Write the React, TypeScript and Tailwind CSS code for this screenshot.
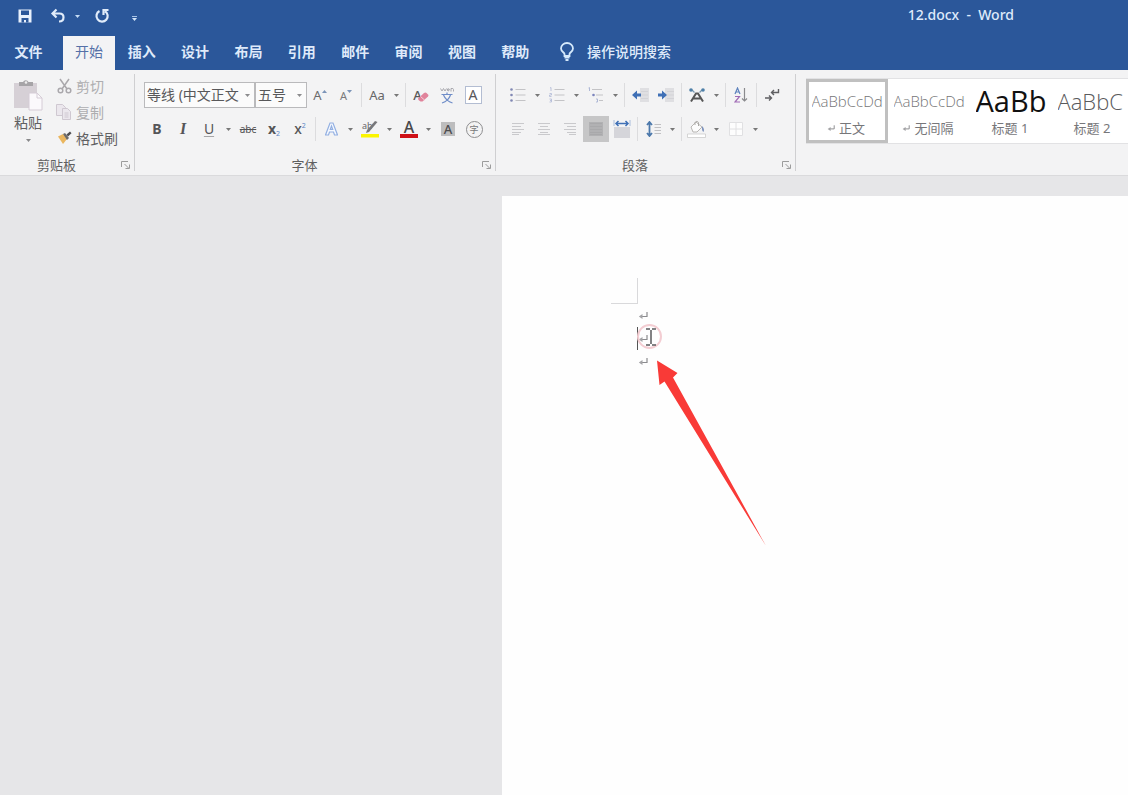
import type { ReactNode } from "react";

const FONT = "font-['Noto_Sans','Noto_Sans_CJK_SC',sans-serif]";

function Caret() {
  return (
    <svg width="5" height="3" viewBox="0 0 5 3" aria-hidden="true">
      <path d="M0 0h5L2.5 3z" fill="currentColor" />
    </svg>
  );
}

function Tool({ label, children, active }: { label: string; children: ReactNode; active?: boolean }) {
  return (
    <button
      type="button"
      aria-label={label}
      className={`flex h-[26px] w-[26px] shrink-0 items-center justify-center leading-none ${active ? "bg-[#c6c6c7]" : ""}`}
    >
      {children}
    </button>
  );
}

function SplitTool({ label, children }: { label: string; children: ReactNode }) {
  return (
    <button type="button" aria-label={label} className="flex h-[26px] w-[39px] shrink-0 items-center leading-none">
      <span className="flex w-[26px] items-center justify-center">{children}</span>
      <span className="flex w-[13px] justify-center text-[#777]">
        <Caret />
      </span>
    </button>
  );
}

function Divider() {
  return (
    <span className="flex w-[5px] shrink-0 justify-center">
      <span className="h-6 w-px bg-[#dcdcde]" />
    </span>
  );
}

function Group({ name, children, className }: { name: string; children: ReactNode; className: string }) {
  return (
    <section aria-label={name} className={`relative flex shrink-0 flex-col ${className}`}>
      <div className="flex-1">{children}</div>
      <div className="flex h-5 items-center">
        <span className="flex-1 pr-1 text-center text-[13px] leading-5 text-[#606060]">{name}</span>
        <button type="button" aria-label={`${name}设置`} className="flex w-[18px] justify-center">
          <svg width="10" height="10" viewBox="0 0 10 10" fill="none" stroke="#9c9c9c">
            <path d="M.5 7V1.500H7M3.500 4l4 4M8.500 4.500v4h-4" />
          </svg>
        </button>
      </div>
      <span className="absolute top-1 right-0 bottom-1 w-px bg-[#cfcfd1]" />
    </section>
  );
}

function SaveIcon() {
  return (
    <svg width="14" height="14" viewBox="0 0 14 14">
      <path d="M0.500 0.500h13v13h-13z" fill="#e9f1fc" />
      <path d="M3 1.500h8v4.500H3zM3.500 9h7v4.500H8V11H6v2.500H3.500z" fill="#2b579a" />
    </svg>
  );
}

function UndoIcon() {
  return (
    <svg width="16" height="16" viewBox="0 0 16 16" fill="none" stroke="#e1ecfa" strokeWidth="2.200">
      <path d="M6.500 1.500 2.500 5.500l4 4M3 5.500h6.500c2.500 0 4 1.500 4 3.700 0 2.500-1.700 4.300-4.500 4.300" />
    </svg>
  );
}

function RedoIcon() {
  return (
    <svg width="16" height="16" viewBox="0 0 16 16" fill="none" stroke="#e1ecfa" strokeWidth="2.200">
      <path d="M5.500 3A5.600 5.600 0 1 0 11 3.200M9.500 7V2h5" />
    </svg>
  );
}

function BulbIcon() {
  return (
    <svg width="14" height="20" viewBox="0 0 14 20" fill="none" stroke="#d5e9fb" strokeWidth="1.800">
      <path d="M4.500 14v-2C4.500 10.500 1 9.500 1 6.500a6 5.500 0 0 1 12 0c0 3-3.500 4-3.500 5.500v2z" />
      <path d="M4.500 15.500h5M5.500 18h3" strokeWidth="2" />
    </svg>
  );
}

function PasteIcon() {
  return (
    <svg width="30" height="32" viewBox="0 0 30 32">
      <path d="M1 4h23v25H1z" fill="#d6d0d6" />
      <path d="M6 3h4a3 3 0 0 1 5.500 0H20v4H6z" fill="#a6a4a7" />
      <circle cx="13" cy="3.500" r="1.300" fill="#eee" />
      <path d="M16 14h8l5 5v12H16z" fill="#fbf9fc" stroke="#d5ccd6" />
      <path d="M24 14v5h5" fill="none" stroke="#d5ccd6" />
    </svg>
  );
}

function CutIcon() {
  return (
    <svg width="15" height="16" viewBox="0 0 15 16" fill="none" stroke="#aaa8ac" strokeWidth="1.500">
      <path d="M3 1l7 10M12 1L5 11" />
      <circle cx="3.500" cy="12.500" r="2.300" />
      <circle cx="11.500" cy="12.500" r="2.300" />
    </svg>
  );
}

function CopyIcon() {
  return (
    <svg width="16" height="16" viewBox="0 0 16 16" fill="#ebe7ed" stroke="#cfc8d1">
      <path d="M.5.5h6l3 3v8h-9z" />
      <path d="M6.500 4.500h5l3 3v8h-8zM8.500 9h4M8.500 11h4M8.500 13h4" />
    </svg>
  );
}

function BrushIcon() {
  return (
    <svg width="15" height="14" viewBox="0 0 15 14">
      <path d="M1 5.500 6 3l4 5-4 5z" fill="#eab65f" />
      <path d="M6 3l2-1 4 5-2 2z" fill="#6d6a68" />
      <path d="M9.500 3.500 13 .5l1.500 1.800L11 5.500z" fill="#4d4d50" />
    </svg>
  );
}

function ListIcon({ numbered }: { numbered?: boolean }) {
  return (
    <svg width="16" height="16" viewBox="0 0 16 16">
      <path d="M5.500 2.500h10M5.500 8h10M5.500 13.500h10" stroke="#c3c3c6" />
      {numbered ? (
        <path d="M1 1l1-.5V4M.5 6.500h2V8h-2v1.500h2M.5 12h2v3h-2M1 13.500h1.500" fill="none" stroke="#aeb8d6" strokeWidth=".8" />
      ) : (
        <g fill="#8188b4">
          <circle cx="1.500" cy="2.500" r="1.300" />
          <circle cx="1.500" cy="8" r="1.300" />
          <circle cx="1.500" cy="13.500" r="1.300" />
        </g>
      )}
    </svg>
  );
}

function MultiLevelIcon() {
  return (
    <svg width="16" height="16" viewBox="0 0 16 16" fill="none">
      <path d="M4 2.500h10M8 8h7M11 13.500h4" stroke="#c3c3c6" />
      <path d="M.5 1l1-.5V4M8 12h1.500v3H8" stroke="#aeb8d6" />
      <circle cx="5.500" cy="8" r="1.300" fill="#7b85bd" />
    </svg>
  );
}

function IndentIcon({ right }: { right?: boolean }) {
  return (
    <svg width="17" height="14" viewBox="0 0 17 14">
      <path d={right ? "M7 0h9v14H7z" : "M8 0h9v14H8z"} fill="#dfdfe2" />
      <path d="M9 3.500h7M9 7h7M9 10.500h7" stroke="#d3d3d7" />
      <path
        d={right ? "M0 5.500h4V2.500l5 4.500-5 4.500V8.500H0z" : "M9 5.500H5V2.500L0 7l5 4.500V8.500h4z"}
        fill="#3f70b6"
      />
    </svg>
  );
}

function AsianLayoutIcon() {
  return (
    <svg width="16" height="14" viewBox="0 0 16 14" fill="none">
      <path d="M2 13.500 7 5.500h2l5 8M4.500 10.500h7" stroke="#555" strokeWidth="2" />
      <path d="M5.500 4.500 3 2M10.500 4.500 13 2" stroke="#7897ad" strokeWidth="1.300" />
      <circle cx="2" cy="2" r="1.800" fill="#4d7fa8" />
      <circle cx="14" cy="2" r="1.800" fill="#4d7fa8" />
    </svg>
  );
}

function SortIcon() {
  return (
    <svg width="14" height="16" viewBox="0 0 14 16" fill="none">
      <path d="M1 7 3.500 1 6 7M2 5h3" stroke="#5d82bd" strokeWidth="1.200" />
      <path d="M1 9.500h4.500L1 15h5" stroke="#a06bb5" strokeWidth="1.200" />
      <path d="M10.500 1v13M8 11.500l2.500 2.500 2.500-2.500" stroke="#8a8a8d" strokeWidth="1.200" />
    </svg>
  );
}

function MarksIcon() {
  return (
    <svg width="16" height="14" viewBox="0 0 16 14" fill="none" stroke="#5f5f62" strokeWidth="1.400">
      <path d="M14.500 1v3.500H8M10 2 7.500 4.500 10 7M1 10h6M5 7.500 7.500 10 5 12.500" />
    </svg>
  );
}

function AlignIcon({ d, active }: { d: string; active?: boolean }) {
  return (
    <svg width="14" height="14" viewBox="0 0 14 14">
      {active && <path d="M0 0h14v14H0z" fill="#b1b1b3" />}
      <path d={d} stroke={active ? "#a9a9ab" : "#c9c9cc"} />
    </svg>
  );
}

function DistributeIcon() {
  return (
    <svg width="18" height="18" viewBox="0 0 18 18">
      <path d="M1 7h16v11H1z" fill="#d5d5da" />
      <path d="M1 0v6M17 0v6" stroke="#a9bddc" />
      <path d="M3 3.500h12M5.500 1 3 3.500 5.500 6M12.500 1 15 3.500 12.500 6" fill="none" stroke="#3f70b6" strokeWidth="1.500" />
    </svg>
  );
}

function SpacingIcon() {
  return (
    <svg width="15" height="16" viewBox="0 0 15 16" fill="none">
      <path d="M3.500 1v14M1 4l2.500-3L6 4M1 12l2.500 3L6 12" stroke="#4c78ab" strokeWidth="1.800" />
      <path d="M8.500 3.500H15M8.500 6.500H15M8.500 9.500H15M8.500 12.500H15" stroke="#c0c0c3" />
    </svg>
  );
}

function BucketIcon() {
  return (
    <svg width="20" height="18" viewBox="0 0 20 18">
      <path d="M4 7l5-5 6 5-5 5H6z" fill="#fcfcfc" stroke="#b8b6b3" />
      <path d="M8 5V2.500a2 2 0 0 1 3.500 0V6" fill="none" stroke="#aaa8a5" />
      <path d="M15 6q3 3 1.500 6-2-1-1.500-6z" fill="#7e93bd" />
      <path d="M.5 14h18v3.500H.5z" fill="#fff" stroke="#c5c5c6" strokeWidth=".7" />
    </svg>
  );
}

function BordersIcon() {
  return (
    <svg width="14" height="14" viewBox="0 0 14 14" fill="#fdfdfd" stroke="#e0e0e2">
      <path d="M.5.5h13v13H.5zM7 .5v13M.5 7h13" />
    </svg>
  );
}

function EraserIcon() {
  return (
    <span className="flex items-center text-[13px] font-medium text-[#58585a]">
      A
      <svg className="mt-1 -ml-1" width="11" height="10" viewBox="0 0 11 10">
        <path d="M0 6.500 6 1q1.500-1 2.500 0l1.500 1.500q1 1 0 2L4.500 9.500H2.500L.5 8z" fill="#e0839b" />
        <path d="M2.500 4.500 6.500 8" stroke="#f5ccd5" />
      </svg>
    </span>
  );
}

function PhoneticIcon() {
  return (
    <svg width="14" height="18" viewBox="0 0 14 18" fill="none">
      <path d="M.5 2.500 2 5l1.500-2.500L5 5l1.500-2.500M7 4h2.500Q9 2 7.500 3q-1 1.500 1.500 2M11 5.500v-3q2.500-.5 2.500 1v2" stroke="#a2a2a8" strokeWidth=".9" />
      <path d="M1.500 8.500h11M7 6.500v2M10.500 9Q8.500 15 2 17M3.500 9Q6 15 12.500 17" stroke="#6f8dc8" strokeWidth="1.200" />
    </svg>
  );
}

function ReturnMark({ small }: { small?: boolean }) {
  return (
    <svg width={small ? 8 : 10} height={small ? 7 : 8} viewBox="0 0 10 8" fill="none" stroke="#8b8b8e" aria-hidden="true">
      <path d="M9 0v4.500H3" strokeWidth="1.200" />
      <path d="M4.500 2 .8 4.500 4.500 7z" fill="#a3a3a6" stroke="none" />
    </svg>
  );
}

function FontGroup() {
  return (
    <Group name="字体" className="w-[361px]">
      <div className="flex flex-col gap-2 pt-3 pl-[9px]">
        <div className="flex h-[26px] items-center">
          <label className="relative flex">
            <span className="sr-only">字体名称</span>
            <select className="h-[26px] w-[111px] appearance-none border border-[#bababc] bg-[#fbfbfb] pr-3 pl-[2px] text-[14px] leading-6 text-[#58585a]">
              <option>等线 (中文正文</option>
            </select>
            <span className="pointer-events-none absolute top-0 right-0 flex h-full w-4 items-center justify-center text-[#8c8c8e]">
              <Caret />
            </span>
          </label>
          <label className="relative flex">
            <span className="sr-only">字号</span>
            <select className="h-[26px] w-[52px] appearance-none border border-[#bababc] bg-[#fbfbfb] pl-[2px] text-[14px] leading-6 text-[#58585a]">
              <option>五号</option>
            </select>
            <span className="pointer-events-none absolute top-0 right-0 flex h-full w-4 items-center justify-center text-[#8c8c8e]">
              <Caret />
            </span>
          </label>
          <Tool label="增大字号">
            <span className="text-[13px] text-[#6a6a6c]">A</span>
            <svg className="mb-2" width="5" height="3" viewBox="0 0 5 3" fill="#7b94b8"><path d="M0 3h5L2.500 0z" /></svg>
          </Tool>
          <Tool label="减小字号">
            <span className="text-[11px] text-[#7a7a7c]">A</span>
            <svg className="mb-2" width="5" height="3" viewBox="0 0 5 3" fill="#7b94b8"><path d="M0 0h5L2.500 3z" /></svg>
          </Tool>
          <Divider />
          <SplitTool label="更改大小写">
            <span className="text-[13px] text-[#666668]">Aa</span>
          </SplitTool>
          <Divider />
          <Tool label="清除格式">
            <EraserIcon />
          </Tool>
          <Tool label="拼音指南">
            <PhoneticIcon />
          </Tool>
          <Tool label="字符边框">
            <span className="flex h-[18px] w-[17px] items-center justify-center border border-[#b3bdd2] bg-white text-[14px] text-[#58585a]">
              A
            </span>
          </Tool>
        </div>
        <div className="flex h-[26px] items-center text-[#555557]">
          <Tool label="加粗">
            <span className="text-[14px] font-bold">B</span>
          </Tool>
          <Tool label="倾斜">
            <span className="font-['Liberation_Serif',serif] text-[16px] font-bold italic">I</span>
          </Tool>
          <SplitTool label="下划线">
            <span className="text-[14px] underline decoration-[#a5a5a7] underline-offset-2">U</span>
          </SplitTool>
          <Tool label="删除线">
            <span className="text-[10px] line-through">abc</span>
          </Tool>
          <Tool label="下标">
            <span className="text-[14px] font-bold">x</span>
            <span className="pt-2 text-[7px] text-[#5b84c4]">2</span>
          </Tool>
          <Tool label="上标">
            <span className="text-[14px] font-medium">x</span>
            <span className="pb-2 text-[7px] text-[#5b84c4]">2</span>
          </Tool>
          <Divider />
          <SplitTool label="文本效果">
            <svg width="13" height="14" viewBox="0 0 13 14" fill="#f6f9ff" stroke="#93b0e2" strokeWidth="1.200">
              <path d="M5 1h3l4.500 12H9.500L8.500 10h-4l-1 3H.5zM6.500 4 5.300 7.500h2.400z" />
            </svg>
          </SplitTool>
          <SplitTool label="突出显示颜色">
            <svg width="18" height="18" viewBox="0 0 18 18">
              <text x="1" y="9" fontSize="9" fill="#66666a">ab</text>
              <path d="M16.500 2 8 12l-3 1 1-3L14 1z" fill="#77777a" />
              <path d="M0 14h18v3.500H0z" fill="#fbf500" />
            </svg>
          </SplitTool>
          <SplitTool label="字体颜色">
            <span className="flex w-[18px] flex-col items-center">
              <span className="text-[16px] leading-[14px] font-medium text-[#48484a]">A</span>
              <span className="h-[4px] w-full bg-[#cf1118]" />
            </span>
          </SplitTool>
          <Tool label="字符底纹">
            <span className="flex h-[14px] w-[14px] items-center justify-center bg-[#bdbdbe] text-[13px] font-medium text-[#4c4c4e]">
              A
            </span>
          </Tool>
          <Tool label="带圈字符">
            <span className="flex h-[17px] w-[17px] items-center justify-center rounded-full border border-[#8e8e90] text-[9px] text-[#78787a]">
              字
            </span>
          </Tool>
        </div>
      </div>
    </Group>
  );
}

function ParagraphGroup() {
  return (
    <Group name="段落" className="w-[300px]">
      <div className="flex flex-col gap-2 pt-3 pl-[9px]">
        <div className="flex h-[26px] items-center">
          <SplitTool label="项目符号"><ListIcon /></SplitTool>
          <SplitTool label="编号"><ListIcon numbered /></SplitTool>
          <SplitTool label="多级列表"><MultiLevelIcon /></SplitTool>
          <Divider />
          <Tool label="减少缩进量"><IndentIcon /></Tool>
          <Tool label="增加缩进量"><IndentIcon right /></Tool>
          <Divider />
          <SplitTool label="中文版式"><AsianLayoutIcon /></SplitTool>
          <Divider />
          <Tool label="排序"><SortIcon /></Tool>
          <Divider />
          <Tool label="显示编辑标记"><MarksIcon /></Tool>
        </div>
        <div className="flex h-[26px] items-center">
          <Tool label="左对齐"><AlignIcon d="M1 1.500h12M1 4.500h9M1 7.500h12M1 10.500h9M1 12.500h7" /></Tool>
          <Tool label="居中"><AlignIcon d="M1 1.500h12M3 4.500h8M1 7.500h12M3 10.500h8M1 12.500h12" /></Tool>
          <Tool label="右对齐"><AlignIcon d="M1 1.500h12M4 4.500h9M1 7.500h12M4 10.500h9M6 12.500h7" /></Tool>
          <Tool label="两端对齐" active><AlignIcon active d="M1 1.500h12M1 4.500h12M1 7.500h12M1 10.500h12M1 12.500h12" /></Tool>
          <Tool label="分散对齐"><DistributeIcon /></Tool>
          <Divider />
          <SplitTool label="行和段落间距"><SpacingIcon /></SplitTool>
          <Divider />
          <SplitTool label="底纹"><BucketIcon /></SplitTool>
          <SplitTool label="边框"><BordersIcon /></SplitTool>
        </div>
      </div>
    </Group>
  );
}

const styles = [
  { name: "正文", mark: true, sample: "AaBbCcDd", look: "text-[15px] font-light text-[#757577]", selected: true },
  { name: "无间隔", mark: true, sample: "AaBbCcDd", look: "text-[15px] font-light text-[#757577]" },
  { name: "标题 1", sample: "AaBb", look: "text-[29px] font-normal text-[#111]" },
  { name: "标题 2", sample: "AaBbC", look: "text-[22px] font-light text-[#5a5a5c]" },
];

const tabs = ["插入", "设计", "布局", "引用", "邮件", "审阅", "视图", "帮助"];

export default function App() {
  return (
    <div className={`flex min-h-screen flex-col overflow-hidden bg-[#e6e6e8] ${FONT}`}>
      <header className="bg-[#2b579a] text-[#dfeafa]">
        <div className="flex h-9 items-center justify-between pl-3">
          <div className="flex items-center gap-[6px] pb-1">
            <Tool label="保存"><SaveIcon /></Tool>
            <button type="button" aria-label="撤消" className="flex h-[26px] w-[39px] items-center">
              <span className="flex w-[28px] justify-center"><UndoIcon /></span>
              <span className="flex w-[11px] justify-center text-[#c5dcf5]"><Caret /></span>
            </button>
            <Tool label="恢复"><RedoIcon /></Tool>
            <Tool label="自定义快速访问工具栏">
              <span className="flex flex-col gap-px pt-1 text-[#d5e6fa]">
                <span className="h-px w-[5px] bg-[#a9c5e8]" />
                <Caret />
              </span>
            </Tool>
          </div>
          <h1 className="pr-[114px] pb-[6px] text-[14px] leading-5 font-medium whitespace-pre">12.docx  -  Word</h1>
        </div>
        <nav aria-label="功能区" className="flex h-[34px] items-stretch text-[14px] font-semibold *:pb-[3px]">
          <a href="#file" className="mr-[6px] flex w-[57px] items-center justify-center">文件</a>
          <a href="#home" aria-current="page" className="flex w-[52px] items-center justify-center bg-[#f3f3f5] font-normal text-[#5570a8]">
            开始
          </a>
          <div className="grid w-[427px] grid-cols-8">
            {tabs.map((t) => (
              <a key={t} href={`#${t}`} className="flex items-center justify-center">{t}</a>
            ))}
          </div>
          <button type="button" className="flex items-center gap-[13px] pl-[18px] font-medium">
            <BulbIcon />
            操作说明搜索
          </button>
        </nav>
      </header>

      <div className="flex h-[106px] overflow-hidden border-b border-[#dadadc] bg-[#f3f3f4]">
        <Group name="剪贴板" className="w-[135px]">
          <div className="flex pt-[3px] text-[14px]">
            <button type="button" className="flex w-[56px] flex-col items-center pt-[6px] leading-5 text-[#606062]">
              <PasteIcon />
              <span className="pt-[2px]">粘贴</span>
              <span className="pt-[6px] text-[#88888a]"><Caret /></span>
            </button>
            <div className="flex flex-col">
              <button type="button" disabled className="flex h-[26px] items-center gap-1 text-[#aeaeb0]">
                <span className="flex w-4 justify-center"><CutIcon /></span>
                剪切
              </button>
              <button type="button" disabled className="flex h-[26px] items-center gap-1 text-[#aeaeb0]">
                <span className="flex w-4 justify-center"><CopyIcon /></span>
                复制
              </button>
              <button type="button" className="flex h-[26px] items-center gap-1 text-[#606062]">
                <span className="flex w-4 justify-center"><BrushIcon /></span>
                格式刷
              </button>
            </div>
          </div>
        </Group>
        <FontGroup />
        <ParagraphGroup />
        <section aria-label="样式" className="min-w-0 flex-1 overflow-hidden pt-2 pl-[10px]">
          <div className="flex h-[66px] border-y border-[#e2e2e4] bg-white">
            {styles.map((s) => (
              <button
                key={s.name}
                type="button"
                className={`flex w-[82px] shrink-0 flex-col items-center border-[3px] px-[2px] ${s.selected ? "border-[#c0c0c0]" : "border-transparent"}`}
              >
                <span className={`flex h-[38px] w-[71px] items-center overflow-hidden font-['Open_Sans','Noto_Sans',sans-serif] ${s.look}`}>
                  {s.sample}
                </span>
                <span className="flex items-center gap-1 pr-[2px] text-[13px] leading-4 whitespace-nowrap text-[#77777a]">
                  {s.mark && <ReturnMark small />}
                  {s.name}
                </span>
              </button>
            ))}
          </div>
        </section>
      </div>

      <main className="flex flex-1 pt-5 pl-[502px]">
        <article aria-label="文档" className="relative flex-1 bg-[#fefefe] pt-[82px] pl-[109px]">
          <div className="h-[26px] w-[27px] border-r border-b border-[#d9d9db]" />
          <div className="pl-[26px]">
            <p className="flex h-[23px] items-center pl-px"><ReturnMark /></p>
            <p className="flex h-[23px] items-center border-l border-[#555]"><ReturnMark /></p>
            <p className="flex h-[23px] items-center pl-px"><ReturnMark /></p>
          </div>
          <svg className="pointer-events-none absolute top-[128px] left-[134px]" width="132" height="224" viewBox="0 0 132 224" fill="none" aria-hidden="true">
            <circle cx="13.500" cy="12.500" r="11.500" stroke="#f3cdd2" strokeWidth="2" />
            <path d="M10 5h4M16 5h4M10 21h4M16 21h4M15 6v14" stroke="#59595c" strokeWidth="1.500" />
            <path d="M21 36.500 41.500 49 37 53.500 130 222 28.500 57.500 23.500 61z" fill="#f93a37" />
          </svg>
        </article>
      </main>
    </div>
  );
}
